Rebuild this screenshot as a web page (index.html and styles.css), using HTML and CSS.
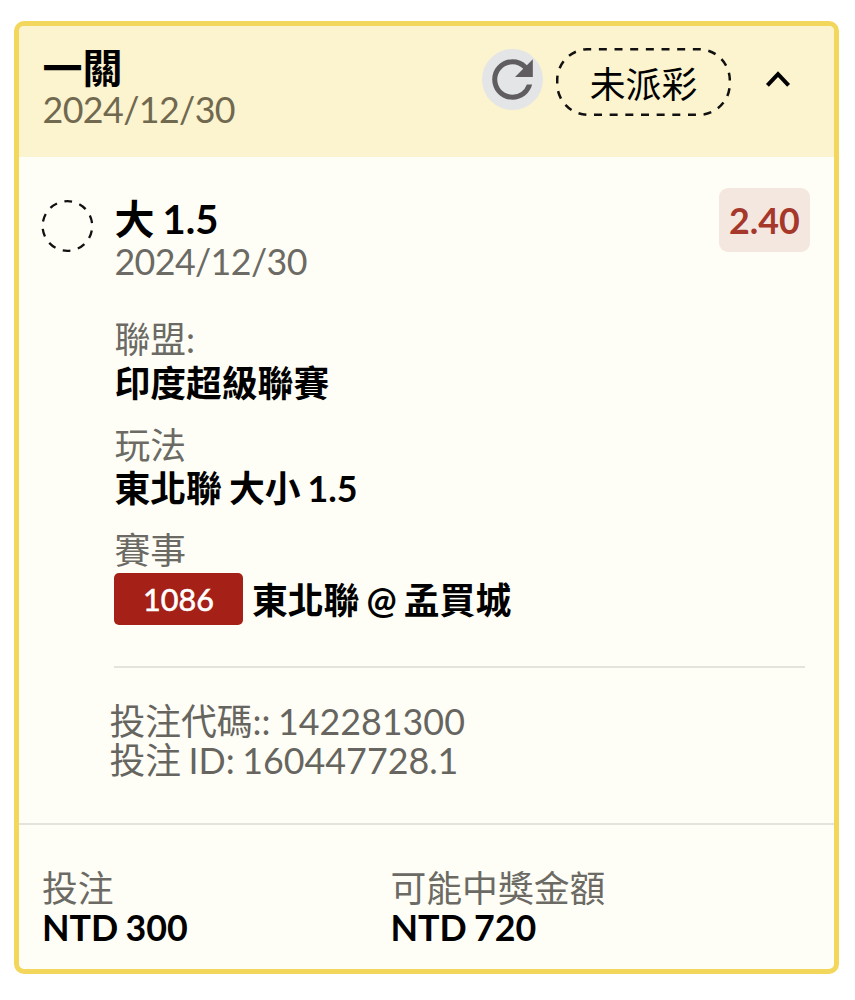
FILE: index.html
```html
<!DOCTYPE html>
<html lang="zh-Hant">
<head>
  <meta charset="UTF-8">
  <title>投注記錄</title>
  <link rel="stylesheet" href="styles.css">
</head>
<body>
  <div class="ticket">
    <div class="ticket-header">
      <div class="heading">
        <div class="title">一關</div>
        <div class="muted date">2024/12/30</div>
      </div>
      <div class="refresh">
        <svg viewBox="0 0 24 24"><path fill="#5f5d60" d="M17.65 6.35A7.958 7.958 0 0 0 12 4c-4.42 0-7.99 3.58-7.99 8s3.57 8 7.99 8c3.73 0 6.84-2.55 7.73-6h-2.08A5.99 5.99 0 0 1 12 18c-3.31 0-6-2.69-6-6s2.69-6 6-6c1.66 0 3.14.69 4.22 1.78L13 11h7V4l-2.35 2.35z"/></svg>
      </div>
      <div class="status">
        <svg class="status-outline" viewBox="0 0 175 68">
          <rect x="1.2" y="1.2" width="172.6" height="65.6" rx="31" pathLength="423.9" fill="none" stroke="#111" stroke-width="2.5" stroke-dasharray="8 7.7" stroke-dashoffset="5"/>
        </svg>
        <span>未派彩</span>
      </div>
      <svg class="chevron" viewBox="0 0 26 18"><path d="M2.4 15.4 13 4.2l10.6 11.2" fill="none" stroke="#000" stroke-width="4"/></svg>
    </div>

    <div class="ticket-body">
      <svg class="pending" viewBox="0 0 52 52">
        <circle cx="26.4" cy="26" r="24.8" pathLength="157" fill="none" stroke="#111" stroke-width="2.3" stroke-dasharray="8 7.7" stroke-dashoffset="-4.7"/>
      </svg>
      <div class="selection">
        <div class="selection-head">
          <div>
            <div class="title">大 1.5</div>
            <div class="muted date">2024/12/30</div>
          </div>
          <div class="odds">2.40</div>
        </div>

        <div class="field">
          <div class="muted">聯盟:</div>
          <div class="value">印度超級聯賽</div>
        </div>
        <div class="field">
          <div class="muted">玩法</div>
          <div class="value">東北聯 大小 1.5</div>
        </div>
        <div class="field">
          <div class="muted">賽事</div>
          <div class="match"><span class="match-no">1086</span><span class="value">東北聯 @ 孟買城</span></div>
        </div>

        <div class="codes">
          <div>投注代碼:: 142281300</div>
          <div>投注 ID: 160447728.1</div>
        </div>
      </div>
    </div>

    <div class="ticket-footer">
      <div>
        <div class="muted">投注</div>
        <div class="value">NTD 300</div>
      </div>
      <div>
        <div class="muted">可能中獎金額</div>
        <div class="value">NTD 720</div>
      </div>
    </div>
  </div>
</body>
</html>
```
FILE: styles.css
```css
* {
  box-sizing: border-box;
}

body {
  margin: 0;
  padding: 21px 16px 0 14px;
  background: #fff;
  font-family: Lato, "Noto Sans CJK TC", sans-serif;
  font-size: 35.8px;
  line-height: 39px;
  word-spacing: -1.6px;
  color: #000;
}

.ticket {
  height: 953px;
  border: 5px solid #f2d75c;
  border-radius: 10px;
  background: #fffef6;
  overflow: hidden;
}

.ticket-header {
  display: flex;
  align-items: flex-start;
  height: 131px;
  padding: 20px 43px 0 23.5px;
  background: #fcf3cf;
}

.heading {
  flex: 1;
}

.title {
  font-size: 40px;
  font-weight: 700;
  line-height: 44px;
}

.muted {
  font-weight: 400;
  color: #6b6a64;
}

.date {
  letter-spacing: -0.6px;
}

.ticket-header .muted {
  color: #70694f;
}

.value {
  font-weight: 700;
}

.refresh {
  width: 61px;
  height: 61px;
  margin-top: 3px;
  border-radius: 50%;
  background: #e4e5e7;
}

.refresh svg {
  display: block;
}

.status {
  position: relative;
  width: 175px;
  height: 68px;
  margin: 2px 0 0 13px;
  line-height: 73px;
  text-align: center;
}

.status-outline {
  position: absolute;
  inset: 0;
}

.chevron {
  width: 26px;
  height: 18px;
  margin: 24px 0 0 34px;
}

.ticket-body {
  display: flex;
  height: 666px;
  padding: 31px 24px 0 22px;
}

.pending {
  flex: none;
  width: 52px;
  height: 52px;
  margin-top: 12px;
}

.selection {
  flex: 1;
  margin-left: 21.4px;
}

.selection-head {
  display: flex;
  justify-content: space-between;
  height: 130px;
}

.selection-head .title {
  margin-top: 9px;
  line-height: 45px;
}

.odds {
  width: 91px;
  height: 64px;
  border-radius: 9px;
  background: #f4e7e0;
  color: #a5372b;
  font-weight: 700;
  line-height: 66px;
  text-align: center;
}

.field {
  height: 105.5px;
  line-height: 43.5px;
}

.match {
  display: flex;
  align-items: center;
  height: 52px;
}

.match .value {
  padding-top: 4px;
}

.match-no {
  width: 129px;
  height: 52px;
  margin-right: 9px;
  margin-left: -0.4px;
  border-radius: 5px;
  background: #a52117;
  color: #fff;
  font-size: 30.5px;
  line-height: 52px;
  text-align: center;
  -webkit-text-stroke: 0.6px #fff;
}

.codes {
  margin: 31px 5px 0 0;
  padding-top: 34px;
  border-top: 2px solid #e4e4dd;
  color: #66655f;
}

.codes div {
  margin-left: -5px;
}

.ticket-footer {
  display: grid;
  grid-template-columns: 348.5px 1fr;
  padding: 44px 23px 0;
  border-top: 2px solid #e4e4dd;
}
```
